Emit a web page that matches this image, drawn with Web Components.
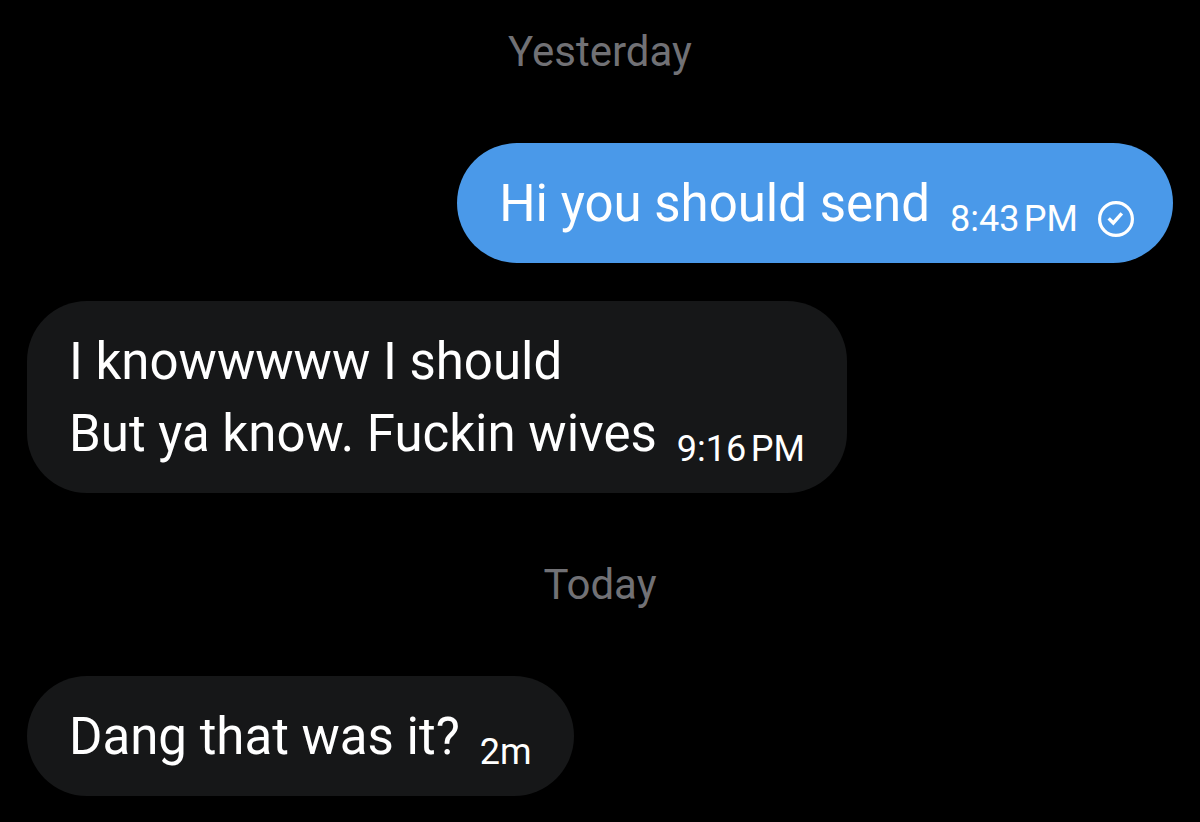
<!DOCTYPE html>
<html lang="en">
<head>
<meta charset="utf-8">
<meta name="viewport" content="width=device-width, initial-scale=1">
<title>Messages</title>
<style>
  body { margin: 0; background: #000; font-family: Roboto, "Liberation Sans", sans-serif; }
  chat-message + chat-message { margin-top: 38px; }
  chat-message + chat-day { margin-top: 64px; }
</style>
</head>
<body>
<chat-thread>
  <chat-day>Yesterday</chat-day>
  <chat-message from="me"><p>Hi you should send</p><time slot="time">8:43&#8239;PM</time><sent-mark slot="status"></sent-mark></chat-message>
  <chat-message><p>I knowwwww I should</p><p>But ya know. Fuckin wives</p><time slot="time">9:16&#8239;PM</time></chat-message>
  <chat-day>Today</chat-day>
  <chat-message><p>Dang that was it?</p><time slot="time">2m</time></chat-message>
</chat-thread>
<script>
  class ShadowElement extends HTMLElement {
    constructor() {
      super();
      this.attachShadow({ mode: "open" }).innerHTML = this.constructor.markup;
    }
  }

  customElements.define("chat-thread", class extends ShadowElement {
    static markup = `
      <style>
        :host { display: block; }
        main { display: flex; flex-direction: column; padding: 0 27px 26px; }
      </style>
      <main><slot></slot></main>`;
  });

  customElements.define("chat-day", class extends ShadowElement {
    static markup = `
      <style>
        :host { display: block; margin: 24px 0 63px; text-align: center; }
        h2 { margin: 0; color: #717175; font-size: 42px; font-weight: 400; line-height: 56px; }
      </style>
      <h2><slot></slot></h2>`;
  });

  customElements.define("chat-message", class extends ShadowElement {
    static markup = `
      <style>
        :host { display: flex; justify-content: flex-start; color: #fff; }
        :host([from="me"]) { justify-content: flex-end; }
        article { display: flex; align-items: flex-end; gap: 20px; padding: 25px 42px 23px;
          border-radius: 60px; background: #161718; }
        :host([from="me"]) article { padding-right: 39px; background: #4a99e9; }
        .text { font-size: 51px; line-height: 72px; }
        footer { display: flex; align-items: center; gap: 20px; font-size: 36px; line-height: 42px; white-space: nowrap; }
        ::slotted(p) { margin: 0; }
      </style>
      <article>
        <div class="text"><slot></slot></div>
        <footer><slot name="time"></slot><slot name="status"></slot></footer>
      </article>`;
  });

  customElements.define("sent-mark", class extends ShadowElement {
    static markup = `
      <style>
        :host { display: block; }
        svg { display: block; }
      </style>
      <svg width="36" height="36" viewBox="0 0 36 36" fill="none" stroke="currentColor" role="img" aria-label="Sent">
        <circle cx="18" cy="18" r="16.4" stroke-width="3.2"/>
        <path d="M10.7 17.4l4.6 4.6 8.5-9.6" stroke-width="3.4"/>
      </svg>`;
  });
</script>
</body>
</html>
